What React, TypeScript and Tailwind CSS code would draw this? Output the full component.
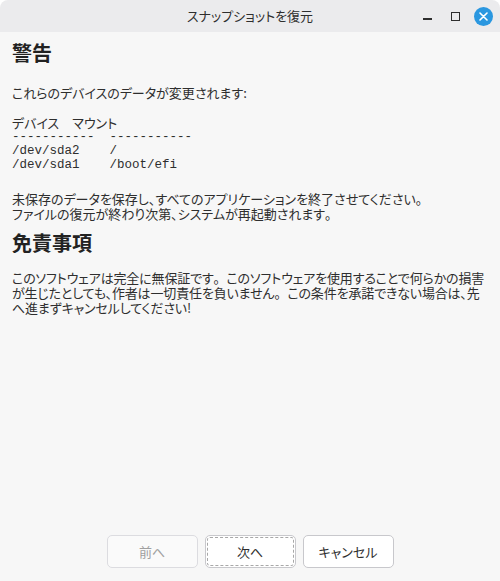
import React from "react";

const jp = "font-['Noto_Sans_CJK_JP','Noto_Sans',sans-serif] [font-feature-settings:'palt']";
const full = "[font-feature-settings:normal]";

export default function App() {
  return (
    <div className="w-[500px] h-[581px] bg-white flex flex-col">
      <div className="relative h-[32px] shrink-0 bg-[#ebebed] rounded-t-[8px] flex items-center justify-center">
        <span className={`${jp} text-[13px] text-[#2e2e2e]`}>スナップショットを復元</span>
        <div className="absolute right-[7px] top-0 h-[32px] flex items-center">
          <div className="w-[9px] h-[1.5px] bg-[#2e2e2e] mt-[6px]" />
          <div className="w-[9px] h-[9px] border-[1.5px] border-[#2e2e2e] ml-[19px]" />
          <div className="w-[19px] h-[19px] rounded-full bg-[#2a97e0] flex items-center justify-center ml-[14px]">
            <svg width="9" height="9" viewBox="0 0 9 9">
              <path d="M1 1 L8 8 M8 1 L1 8" stroke="white" strokeWidth="1.6" strokeLinecap="round" />
            </svg>
          </div>
        </div>
      </div>
      <div className={`flex-1 bg-[#f7f7f7] flex flex-col px-[12px] text-[#2e2e2e] ${jp}`}>
        <h1 className="text-[20px] font-bold leading-[24px] mt-[9px] text-[#222]">警告</h1>
        <p className="text-[13px] leading-[15px] mt-[20px]">これらのデバイスのデータが変更されます:</p>
        <p className="text-[13px] leading-[15px] mt-[15px]">デバイス　マウント</p>
        <pre className="font-['Liberation_Mono',monospace] text-[12.5px] leading-[14px] mt-[0px] text-[#2e2e2e] [font-feature-settings:normal]">
{`-----------  -----------
/dev/sda2    /
/dev/sda1    /boot/efi`}
        </pre>
        <p className="text-[13px] leading-[15px] mt-[19px] whitespace-nowrap">
          未保存のデータを保存し、すべてのアプリケーションを終了させてください<span className={full}>。</span>
          <br />
          ファイルの復元が終わり次第、システムが再起動されます<span className={full}>。</span>
        </p>
        <h1 className="text-[20px] font-bold leading-[24px] mt-[10px] text-[#222]">免責事項</h1>
        <p className="text-[13px] leading-[15px] mt-[15px] whitespace-nowrap tracking-[-0.15px]">
          このソフトウェアは完全に無保証です<span className={full}>。</span>このソフトウェアを使用することで何らかの損害
          <br />
          が生じたとしても、作者は一切責任を負いません<span className={full}>。</span>この条件を承諾できない場合は、先
          <br />
          へ進まずキャンセルしてください!
        </p>
        <div className="flex-1" />
        <div className="flex justify-center gap-[7px] pb-[13px]">
          <button className="w-[91px] h-[33px] rounded-[5px] border border-[#dcdce0] bg-[#fafafa] text-[13px] text-[#a0a0a0]">
            前へ
          </button>
          <button className="w-[91px] h-[33px] rounded-[5px] border border-[#c8c8cc] bg-white text-[13px] text-[#2e2e2e] p-[1px]">
            <div className="w-full h-full border border-dashed border-[#a8a8a8] rounded-[3px] flex items-center justify-center">次へ</div>
          </button>
          <button className="w-[91px] h-[33px] rounded-[5px] border border-[#c8c8cc] bg-white text-[13px] text-[#2e2e2e]">
            キャンセル
          </button>
        </div>
      </div>
    </div>
  );
}
